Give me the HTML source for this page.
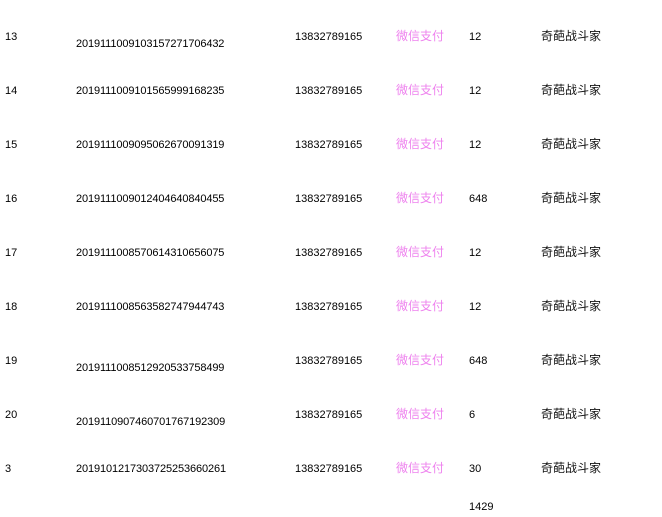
<!DOCTYPE html>
<html><head><meta charset="utf-8"><style>
body{margin:0;width:662px;height:517px;background:#fff;position:relative;font-family:"Liberation Sans","Noto Sans CJK SC",sans-serif;font-size:11px;color:#000;overflow:hidden}
div{position:absolute;white-space:nowrap;line-height:13px}
.p{color:#ee82ee;font-size:12px}
.c{font-size:12px;color:#111}
.n{letter-spacing:-0.12px}
</style></head><body>
<div style="left:5px;top:31px">13</div><div class="n" style="left:76px;top:38px">2019111009103157271706432</div><div style="left:295px;top:31px">13832789165</div><div class="p" style="left:396px;top:30px">微信支付</div><div style="left:469px;top:31px">12</div><div class="c" style="left:541px;top:30px">奇葩战斗家</div>
<div style="left:5px;top:85px">14</div><div class="n" style="left:76px;top:85px">2019111009101565999168235</div><div style="left:295px;top:85px">13832789165</div><div class="p" style="left:396px;top:84px">微信支付</div><div style="left:469px;top:85px">12</div><div class="c" style="left:541px;top:84px">奇葩战斗家</div>
<div style="left:5px;top:139px">15</div><div class="n" style="left:76px;top:139px">2019111009095062670091319</div><div style="left:295px;top:139px">13832789165</div><div class="p" style="left:396px;top:138px">微信支付</div><div style="left:469px;top:139px">12</div><div class="c" style="left:541px;top:138px">奇葩战斗家</div>
<div style="left:5px;top:193px">16</div><div class="n" style="left:76px;top:193px">2019111009012404640840455</div><div style="left:295px;top:193px">13832789165</div><div class="p" style="left:396px;top:192px">微信支付</div><div style="left:469px;top:193px">648</div><div class="c" style="left:541px;top:192px">奇葩战斗家</div>
<div style="left:5px;top:247px">17</div><div class="n" style="left:76px;top:247px">2019111008570614310656075</div><div style="left:295px;top:247px">13832789165</div><div class="p" style="left:396px;top:246px">微信支付</div><div style="left:469px;top:247px">12</div><div class="c" style="left:541px;top:246px">奇葩战斗家</div>
<div style="left:5px;top:301px">18</div><div class="n" style="left:76px;top:301px">2019111008563582747944743</div><div style="left:295px;top:301px">13832789165</div><div class="p" style="left:396px;top:300px">微信支付</div><div style="left:469px;top:301px">12</div><div class="c" style="left:541px;top:300px">奇葩战斗家</div>
<div style="left:5px;top:355px">19</div><div class="n" style="left:76px;top:362px">2019111008512920533758499</div><div style="left:295px;top:355px">13832789165</div><div class="p" style="left:396px;top:354px">微信支付</div><div style="left:469px;top:355px">648</div><div class="c" style="left:541px;top:354px">奇葩战斗家</div>
<div style="left:5px;top:409px">20</div><div class="n" style="left:76px;top:416px">2019110907460701767192309</div><div style="left:295px;top:409px">13832789165</div><div class="p" style="left:396px;top:408px">微信支付</div><div style="left:469px;top:409px">6</div><div class="c" style="left:541px;top:408px">奇葩战斗家</div>
<div style="left:5px;top:463px">3</div><div class="n" style="left:76px;top:463px">2019101217303725253660261</div><div style="left:295px;top:463px">13832789165</div><div class="p" style="left:396px;top:462px">微信支付</div><div style="left:469px;top:463px">30</div><div class="c" style="left:541px;top:462px">奇葩战斗家</div>
<div style="left:469px;top:501px">1429</div>
</body></html>
